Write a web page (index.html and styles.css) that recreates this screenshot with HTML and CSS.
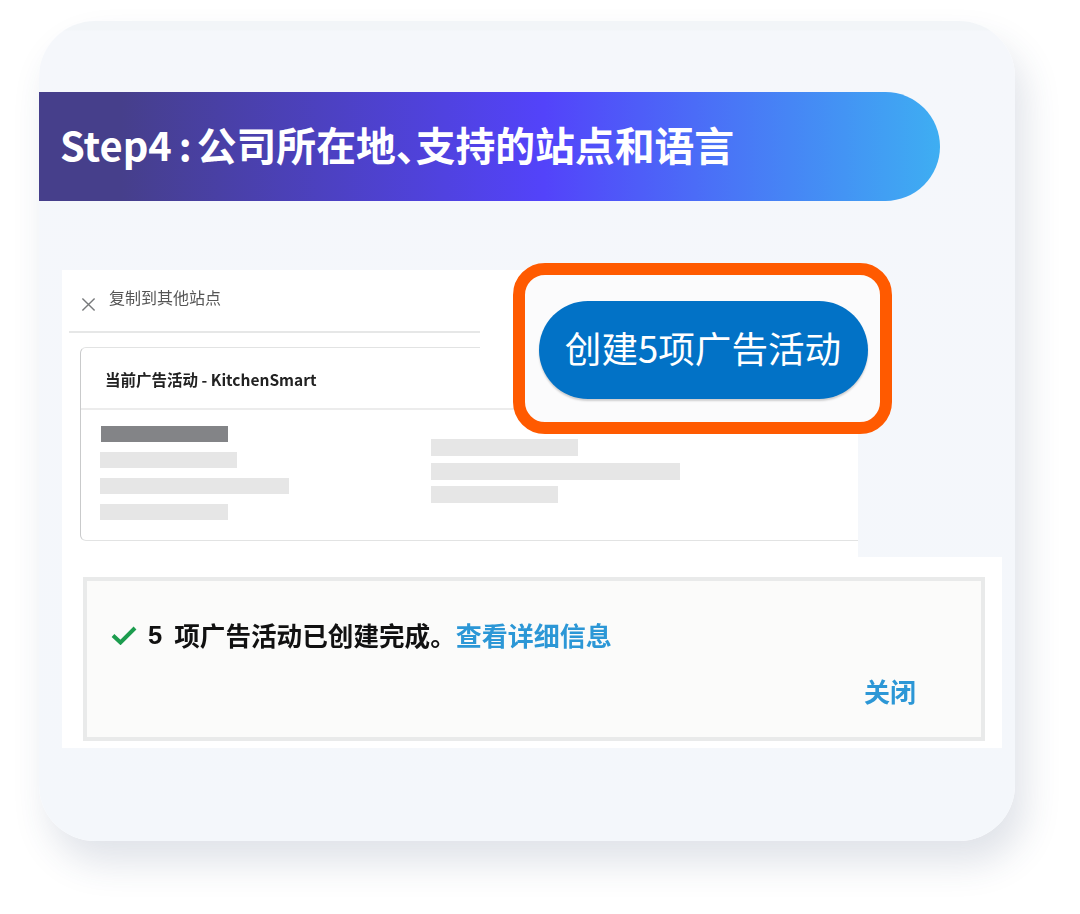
FILE: index.html
```html
<!DOCTYPE html>
<html lang="zh-CN">
<head>
<meta charset="utf-8">
<title>Step4</title>
<link rel="stylesheet" href="styles.css">
</head>
<body>
<main class="card">
  <h1 class="band"><span>Step4<span class="colon">:</span>公司所在地、支持的站点和语言</span></h1>
  <section class="shots">
    <div class="panel-top">
      <header class="dialog-head">
        <svg class="close" viewBox="0 0 16 16" aria-hidden="true"><path d="M1.500 1.500 14.500 14.500M14.500 1.500 1.500 14.500"/></svg>
        <span class="dialog-title">复制到其他站点</span>
      </header>
      <div class="inner">
        <div class="inner-head">当前广告活动 - KitchenSmart</div>
        <div class="inner-body">
          <div class="col col-left">
            <i class="bar bar-dark w127"></i>
            <i class="bar w137"></i>
            <i class="bar w189"></i>
            <i class="bar w128"></i>
          </div>
          <div class="col col-right">
            <i class="bar w147"></i>
            <i class="bar w249"></i>
            <i class="bar w127"></i>
          </div>
        </div>
      </div>
    </div>
    <div class="panel-bottom">
      <div class="alert">
        <p class="alert-msg">
          <svg class="check" viewBox="0 0 26 20" aria-hidden="true"><path d="M2 10.500 9.500 17.500 24 3"/></svg>
          <span class="num">5</span><span>项广告活动已创建完成。</span><a class="link">查看详细信息</a>
        </p>
        <a class="link dismiss">关闭</a>
      </div>
    </div>
    <div class="patch"></div>
    <div class="highlight">
      <button class="cta">创建5项广告活动</button>
    </div>
  </section>
</main>
</body>
</html>
```
FILE: styles.css
```css
* { box-sizing: border-box; }
html, body { margin: 0; background: #fff; }
body {
  width: 1080px;
  height: 914px;
  overflow: hidden;
  padding: 21px 65px 0 39px;
  font-family: "Noto Sans CJK SC", "Noto Sans", sans-serif;
}
.card {
  width: 976px;
  height: 820px;
  padding-top: 71px;
  background: linear-gradient(180deg, #f2f5f8 0, #f2f5f8 9px, #f5f7fb 10px, #f4f7fb 100%);
  border-radius: 56px;
  box-shadow: 10px 22px 36px rgba(50, 70, 110, .15);
}
.band {
  display: flex;
  align-items: center;
  width: 901px;
  height: 109px;
  margin: 0;
  padding: 0 0 6px 21px;
  color: #fff;
  font-size: 39.800px;
  font-weight: 700;
  font-feature-settings: "palt";
  background: linear-gradient(90deg, #463f8b 9%, #5343fa 56%, #3eaef2 100%);
  border-radius: 0 55px 55px 0;
}
.colon {
  margin: 0 5px 0 7px;
}
.shots {
  position: relative;
  margin: 69px 0 0 23px;
}
.panel-top {
  width: 796px;
  height: 287px;
  padding: 0 0 0 7px;
  background: #fff;
}
.dialog-head {
  display: flex;
  align-items: flex-start;
  gap: 13px;
  width: 411px;
  height: 63px;
  padding: 17px 0 0 12px;
  border-bottom: 2px solid #e6e7e7;
  filter: blur(.4px);
}
.close {
  width: 15px;
  height: 15px;
  margin-top: 10px;
  fill: none;
  stroke: #77797b;
  stroke-width: 1.500;
}
.dialog-title {
  color: #555;
  font-size: 16px;
  line-height: 20px;
}
.inner {
  width: 778px;
  height: 194px;
  margin: 14px 0 0 11px;
  border: 1px solid #e2e3e3;
  border-left-color: #c9cacb;
  border-right: 0;
  border-radius: 6px 0 0 6px;
  filter: blur(.4px);
}
.inner-head {
  height: 62px;
  padding: 21px 0 0 24px;
  color: #222;
  font-size: 15.500px;
  font-weight: 700;
  line-height: 20px;
  border-bottom: 2px solid #ececec;
}
.inner-body {
  display: flex;
}
.col {
  display: flex;
  flex-direction: column;
}
.col-left {
  width: 350px;
  gap: 10px;
  padding: 16px 0 0 19px;
}
.col-left .bar {
  height: 16px;
}
.col-left .bar-dark {
  margin-left: 1px;
}
.col-right {
  gap: 6.500px;
  padding-top: 29px;
}
.bar {
  display: block;
  height: 17px;
  background: #e6e6e6;
}
.col-left .bar-dark { background: #838487; }
.w127 { width: 127px; }
.w128 { width: 128px; }
.w137 { width: 137px; }
.w147 { width: 147px; }
.w189 { width: 189px; }
.w249 { width: 249px; }
.panel-bottom {
  width: 940px;
  height: 191px;
  padding: 20px 17px 7px 21px;
  background: #fff;
}
.alert {
  display: flex;
  flex-direction: column;
  height: 164px;
  padding: 39px 65px 0 24px;
  background: #fbfbfa;
  border: 4px solid #e9eaea;
  filter: blur(.7px);
}
.alert-msg {
  display: flex;
  align-items: center;
  height: 30px;
  margin: 0;
  color: #111;
  font-size: 25.600px;
  font-weight: 700;
  line-height: 30px;
}
.check {
  width: 26px;
  height: 20px;
  margin-right: 11px;
  fill: none;
  stroke: #1c9c4e;
  stroke-width: 4;
}
.num {
  margin-right: 12px;
  font-family: "Liberation Sans", sans-serif;
  font-weight: 700;
}
.link {
  color: #2c97d6;
  font-size: 26px;
  font-weight: 700;
}
.dismiss {
  align-self: flex-end;
  margin-top: 26px;
  line-height: 30px;
}
.patch {
  position: absolute;
  left: 418px;
  top: 0;
  width: 40px;
  height: 130px;
  background: #fff;
}
.highlight {
  position: absolute;
  left: 451px;
  top: -7px;
  display: flex;
  align-items: center;
  justify-content: center;
  width: 379px;
  height: 171px;
  padding: 3px 0 0 1px;
  background: #fbfbfc;
  border: 12px solid #ff5a00;
  border-radius: 32px;
}
.cta {
  width: 329px;
  height: 98px;
  padding: 0 0 6px;
  color: #fff;
  font-family: inherit;
  font-size: 36.600px;
  font-weight: 400;
  background: #0272c6;
  border: 0;
  border-radius: 49px;
  box-shadow: 0 2px 2px rgba(0, 0, 0, .18);
}
```
